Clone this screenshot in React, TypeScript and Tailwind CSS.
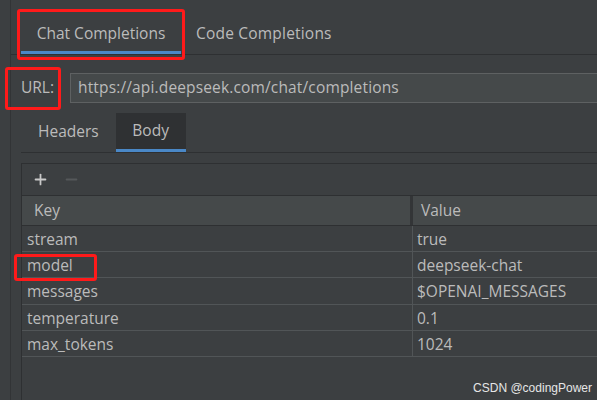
import { Plus, Minus } from "lucide-react";

const params = [
  { key: "stream", value: "true" },
  { key: "model", value: "deepseek-chat" },
  { key: "messages", value: "$OPENAI_MESSAGES" },
  { key: "temperature", value: "0.1" },
  { key: "max_tokens", value: "1024" },
];

export default function App() {
  return (
    <div
      className="relative flex h-[400px] w-[597px] overflow-hidden bg-[#3c3f41] text-[15.5px] text-[#bbbbbb]"
      style={{ fontFamily: '"Open Sans", "Noto Sans", sans-serif' }}
    >
      {/* left gutter */}
      <div className="w-[11px] shrink-0 border-r border-[#323436]" />

      <div className="flex min-w-0 flex-1 flex-col">
        {/* top tabs */}
        <div className="flex h-[55px] items-end border-b border-[#2e3032] pl-[10px]">
          <div className="flex h-full w-[160px] flex-col justify-end">
            <div className="flex flex-1 items-center justify-center pt-[17px]">Chat Completions</div>
            <div className="h-[3px] bg-[#4a88c7]" />
          </div>
          <div className="flex h-full items-center px-[15px] pt-[13px] tracking-[0.2px]">Code Completions</div>
        </div>

        {/* url */}
        <div className="flex h-[58px] items-center pl-[10px] pt-[7px]">
          <span className="w-[49px]">URL:</span>
          <div className="flex h-[30px] flex-1 items-center border border-r-0 border-[#5e6162] bg-[#45494a] pl-[7px] tracking-[0.15px]">
            https://api.deepseek.com/chat/completions
          </div>
        </div>

        {/* body tabs */}
        <div className="ml-[10px] flex h-[40px] border-b border-[#2e3032]">
          <div className="flex items-center px-[17px] pb-[2px]">Headers</div>
          <div className="flex w-[70px] flex-col bg-[#2f3133]">
            <div className="flex flex-1 items-center justify-center">Body</div>
            <div className="h-[3px] bg-[#4a88c7]" />
          </div>
        </div>

        {/* params table */}
        <div className="ml-[10px] mt-[10px] flex flex-1 flex-col border-l border-t border-[#2e3032]">
          <div className="flex h-[31px] items-center gap-[14px] pl-[10px]">
            <Plus size={17} strokeWidth={2.5} className="text-[#c9c9c9]" />
            <Minus size={17} strokeWidth={2.5} className="text-[#55585a]" />
          </div>
          <div className="flex h-[31px] border-t border-b border-[#2e3032] bg-[#45494a]">
            <div className="flex w-[391px] items-center border-r-[3px] border-[#333537] pl-[12px] pt-[1px]">Key</div>
            <div className="flex flex-1 items-center pl-[8px] pt-[1px]">Value</div>
          </div>
          {params.map((p) => (
            <div key={p.key} className="flex h-[26.2px] border-b border-[#515557]">
              <div className="flex w-[391px] items-center border-r border-[#515557] pl-[5px] pt-[2px]">{p.key}</div>
              <div className="flex flex-1 items-center pl-[4px] pt-[2px]">{p.value}</div>
            </div>
          ))}
          <div className="flex-1" />
        </div>
      </div>

      {/* annotation boxes */}
      <div className="pointer-events-none absolute left-[17px] top-[9px] h-[51px] w-[168px] rounded-[3px] border-[3px] border-[#ff1a1a]" />
      <div className="pointer-events-none absolute left-[5px] top-[67px] h-[43px] w-[56px] rounded-[3px] border-[3px] border-[#ff1a1a]" />
      <div className="pointer-events-none absolute left-[14px] top-[254px] h-[27px] w-[83px] rounded-[3px] border-[3px] border-[#ff1a1a]" />

      <div
        className="absolute bottom-[3px] right-[5px] text-[12px] text-[#e6e6e6]"
        style={{ fontFamily: '"Liberation Sans", sans-serif' }}
      >
        CSDN @codingPower
      </div>
    </div>
  );
}
